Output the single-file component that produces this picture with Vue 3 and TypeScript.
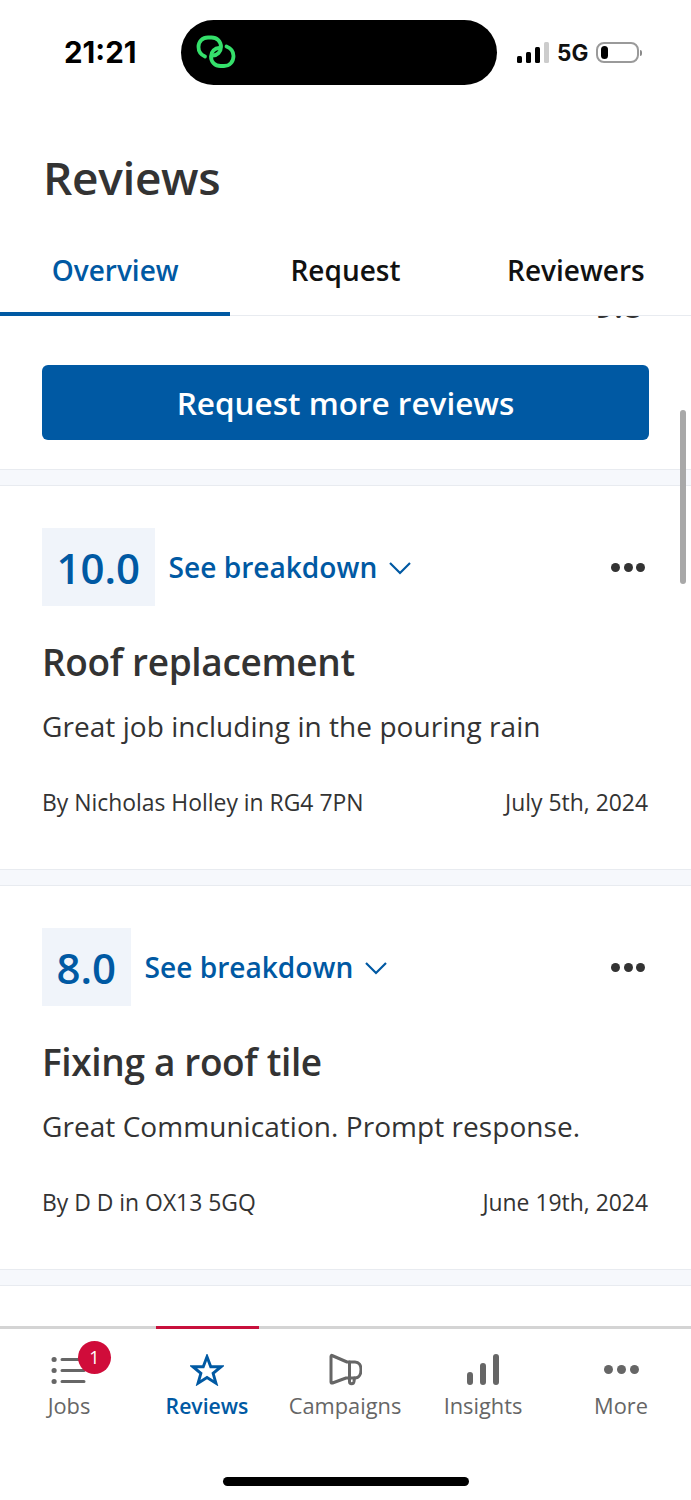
<script setup lang="ts">
type Review = {
  score: string;
  title: string;
  text: string;
  by: string;
  date: string;
};

const reviews: Review[] = [
  {
    score: "10.0",
    title: "Roof replacement",
    text: "Great job including in the pouring rain",
    by: "By Nicholas Holley in RG4 7PN",
    date: "July 5th, 2024",
  },
  {
    score: "8.0",
    title: "Fixing a roof tile",
    text: "Great Communication. Prompt response.",
    by: "By D D in OX13 5GQ",
    date: "June 19th, 2024",
  },
];

const tabs = ["Overview", "Request", "Reviewers"];
</script>

<template>
  <div class="phone">
    <header class="status">
      <span class="time">21:21</span>
      <div class="island">
        <svg class="link-icon" width="42" height="34" viewBox="0 0 42 34" fill="none" stroke="#35e06b" stroke-width="3.8" stroke-linecap="round">
          <path d="M9 21.5C4.5 19.5 2.5 16 2.5 12C2.5 6.5 6.5 2.5 12 2.5H15.5C21 2.5 25 6.5 25 12C25 17 21 20.5 17 20.5" />
          <path d="M30.5 11.5C35.5 13.5 37.5 17 37.5 21C37.5 27 33.5 31 28 31H24.5C19 31 15 27 15 21.5C15 16.5 19 13 23 13" />
        </svg>
      </div>
      <div class="status-right">
        <div class="signal">
          <i class="b1"></i><i class="b2"></i><i class="b3"></i><i class="b4"></i>
        </div>
        <span class="net">5G</span>
        <div class="battery"><i></i></div>
        <div class="battery-tip"></div>
      </div>
    </header>

    <h1 class="heading">Reviews</h1>

    <nav class="tabs">
      <div v-for="(tab, i) in tabs" :key="tab" class="tab" :class="{ active: i === 0 }">{{ tab }}</div>
    </nav>

    <main class="content">
      <div class="clipped"><span>9.8</span></div>
      <div class="cta">
        <button class="request">Request more reviews</button>
      </div>
      <div class="band"></div>
      <template v-for="r in reviews" :key="r.title">
        <section class="card">
          <div class="card-top">
            <div class="score">{{ r.score }}</div>
            <span class="breakdown">See breakdown</span>
            <svg class="chev" width="24" height="14" viewBox="0 0 24 14" fill="none" stroke="#0059a3" stroke-width="2.2">
              <path d="M2 2L12 12L22 2" />
            </svg>
            <div class="dots"><i></i><i></i><i></i></div>
          </div>
          <h2>{{ r.title }}</h2>
          <p class="text">{{ r.text }}</p>
          <div class="meta">
            <span>{{ r.by }}</span>
            <span>{{ r.date }}</span>
          </div>
        </section>
        <div class="band"></div>
      </template>
      <div class="scrollbar"></div>
    </main>

    <footer class="nav">
      <div class="nav-lines">
        <div class="nav-active"></div>
      </div>
      <div class="nav-items">
        <div class="nav-item">
          <div class="nav-icon">
            <svg width="36" height="30" viewBox="0 0 36 30" fill="none" stroke="#666" stroke-width="3" stroke-linecap="round">
              <path d="M3 4.5H3.2M3 15.5H3.2M3 26.5H3.2" stroke-width="5" />
              <path d="M11 4.5H33M11 15.5H33M11 26.5H33" />
            </svg>
            <span class="badge">1</span>
          </div>
          <span>Jobs</span>
        </div>
        <div class="nav-item current">
          <div class="nav-icon">
            <svg width="34" height="32" viewBox="0 0 36 34" fill="none" stroke="#0059a3" stroke-width="3.1" stroke-linejoin="miter">
              <path d="M18 3L22 13.5H33L24.5 20.5L27.5 31L18 25L8.5 31L11.5 20.5L3 13.5H14Z" />
            </svg>
          </div>
          <span>Reviews</span>
        </div>
        <div class="nav-item">
          <div class="nav-icon">
            <svg width="34" height="33" viewBox="-1 0 34 33" fill="none" stroke="#666" stroke-width="3" stroke-linejoin="round" stroke-linecap="round">
              <path d="M3 2.5L18 9H26C30 9 32 12.5 32 16.5C32 21 30 25 26 25H17L3.5 30C2.5 30.3 2 30 2 29V3.5C2 2.5 2.5 2.2 3 2.5Z" />
              <path d="M20.5 9V28.5C20.5 31.5 24.5 31.5 25 28.5L25.5 25" />
            </svg>
          </div>
          <span>Campaigns</span>
        </div>
        <div class="nav-item">
          <div class="nav-icon">
            <svg width="34" height="34" viewBox="0 0 34 34" fill="none" stroke="#666" stroke-width="6" stroke-linecap="round">
              <path d="M4 22V29M17 13V29M30 4V29" />
            </svg>
          </div>
          <span>Insights</span>
        </div>
        <div class="nav-item">
          <div class="nav-icon">
            <div class="dots grey"><i></i><i></i><i></i></div>
          </div>
          <span>More</span>
        </div>
      </div>
      <div class="home-row"><div class="home"></div></div>
    </footer>
  </div>
</template>

<style scoped>
.phone {
  width: 691px;
  height: 1500px;
  display: flex;
  flex-direction: column;
  overflow: hidden;
  background: #fff;
  font-family: "Open Sans", "Noto Sans", sans-serif;
  color: #333;
}

.status {
  height: 146px;
  flex: none;
  display: flex;
  align-items: flex-start;
  padding-top: 20px;
  box-sizing: border-box;
}

.time {
  width: 181px;
  padding-left: 64px;
  box-sizing: border-box;
  margin-top: 16px;
  font-family: "Inter", "Liberation Sans", sans-serif;
  font-weight: 700;
  font-size: 29.5px;
  line-height: 33px;
  color: #000;
}

.island {
  width: 316px;
  height: 65px;
  background: #000;
  border-radius: 33px;
  display: flex;
  align-items: center;
  padding-left: 15px;
  padding-bottom: 2px;
  box-sizing: border-box;
}

.status-right {
  display: flex;
  align-items: center;
  height: 65px;
  padding-left: 20px;
}

.signal {
  display: flex;
  align-items: flex-end;
  gap: 4px;
  height: 21px;
}

.signal i {
  display: block;
  width: 5px;
  border-radius: 1.5px;
  background: #000;
}

.b1 { height: 7px; }
.b2 { height: 11px; }
.b3 { height: 16px; }
.signal .b4 { height: 21px; background: #ccc; }

.net {
  margin-left: 8px;
  font-family: "Inter", "Liberation Sans", sans-serif;
  font-weight: 700;
  font-size: 22.5px;
  line-height: 24px;
  color: #111;
}

.battery {
  margin-left: 8px;
  width: 43px;
  height: 21px;
  border: 2px solid #9a9a9a;
  border-radius: 8px;
  box-sizing: border-box;
  padding: 2px;
}

.battery i {
  display: block;
  width: 7px;
  height: 13px;
  background: #000;
  border-radius: 4px;
  margin-left: 1px;
}

.battery-tip {
  margin-left: 1px;
  width: 2px;
  height: 6px;
  background: #8a8a8a;
  border-radius: 0 2px 2px 0;
}

.heading {
  margin: 0 0 0 43px;
  font-size: 46px;
  line-height: 62px;
  font-weight: 600;
  letter-spacing: -0.35px;
  color: #333;
}

.tabs {
  margin-top: 14px;
  height: 94px;
  flex: none;
  display: flex;
  box-sizing: border-box;
  border-bottom: 1px solid #e8ebf0;
}

.tab {
  flex: 1;
  height: 94px;
  box-sizing: border-box;
  padding-top: 6px;
  display: flex;
  align-items: center;
  justify-content: center;
  font-size: 28px;
  font-weight: 600;
  color: #111;
  border-bottom: 4px solid transparent;
}

.tab.active {
  color: #0059a3;
  border-bottom-color: #0059a3;
}

.content {
  position: relative;
  flex: 1;
  min-height: 0;
  overflow: hidden;
}

.clipped {
  height: 3px;
  overflow: hidden;
  display: flex;
  justify-content: flex-end;
  padding-right: 49px;
}

.clipped span {
  display: block;
  flex: none;
  margin-top: -31px;
  font-size: 33px;
  line-height: 42px;
  font-weight: 600;
  color: #333;
}

.cta {
  padding: 46px 42px 29px;
}

.request {
  display: block;
  width: 100%;
  height: 75px;
  border: none;
  border-radius: 6px;
  background: #0059a3;
  color: #fff;
  font-family: inherit;
  font-size: 31.5px;
  font-weight: 600;
}

.band {
  height: 17px;
  box-sizing: border-box;
  background: #f6f8fc;
  border-top: 1px solid #e8ebf0;
  border-bottom: 1px solid #e8ebf0;
}

.card {
  height: 383px;
  box-sizing: border-box;
  padding: 42px 43px 0 42px;
}

.card-top {
  display: flex;
  align-items: center;
  height: 78px;
}

.score {
  height: 78px;
  padding: 0 14.5px;
  display: flex;
  align-items: center;
  background: #f0f4fa;
  color: #0059a3;
  font-size: 42px;
  font-weight: 600;
}

.breakdown {
  margin-left: 14px;
  font-size: 28.1px;
  font-weight: 600;
  color: #0059a3;
}

.chev {
  margin-left: 11px;
  margin-top: 1px;
}

.dots {
  margin-left: auto;
  display: flex;
  gap: 3.5px;
  padding-right: 3px;
}

.dots i {
  display: block;
  width: 9px;
  height: 9px;
  border-radius: 50%;
  background: #333;
}

.dots.grey {
  margin: 0;
  padding: 0;
  gap: 4px;
}

.dots.grey i {
  background: #666;
}

h2 {
  margin: 31px 0 0;
  font-size: 37px;
  line-height: 50px;
  font-weight: 600;
  letter-spacing: -0.35px;
  color: #333;
}

.text {
  margin: 20px 0 0;
  font-size: 28px;
  line-height: 38px;
  letter-spacing: 0.05px;
  color: #333;
}

.meta {
  margin-top: 42px;
  display: flex;
  justify-content: space-between;
  font-size: 22.9px;
  line-height: 32px;
  color: #333;
}

.scrollbar {
  position: absolute;
  right: 5px;
  top: 94px;
  width: 6px;
  height: 174px;
  border-radius: 3px;
  background: #a8a8a8;
}

.nav {
  flex: none;
  height: 174px;
  position: relative;
}

.nav-lines {
  height: 3px;
  background: #d4d4d4;
}

.nav-active {
  width: 103px;
  height: 3px;
  margin-left: 156px;
  background: #c8103c;
}

.nav-items {
  display: flex;
  padding-top: 19px;
}

.nav-item {
  width: 138px;
  flex: none;
  display: flex;
  flex-direction: column;
  align-items: center;
  font-size: 21.8px;
  line-height: 30px;
  color: #666;
}

.nav-item.current {
  color: #0059a3;
  font-size: 21.2px;
  font-weight: 600;
}

.nav-icon {
  position: relative;
  height: 43px;
  display: flex;
  align-items: center;
  justify-content: center;
}

.badge {
  position: absolute;
  top: -7px;
  left: 27px;
  width: 33px;
  height: 33px;
  border-radius: 50%;
  background: #d00c3a;
  color: #fff;
  font-size: 18px;
  line-height: 33px;
  text-align: center;
}

.home-row {
  display: flex;
  justify-content: center;
  padding-top: 56px;
}

.home {
  width: 246px;
  height: 9px;
  border-radius: 5px;
  background: #000;
}
</style>

<style>
html, body {
  margin: 0;
  background: #fff;
}
</style>
